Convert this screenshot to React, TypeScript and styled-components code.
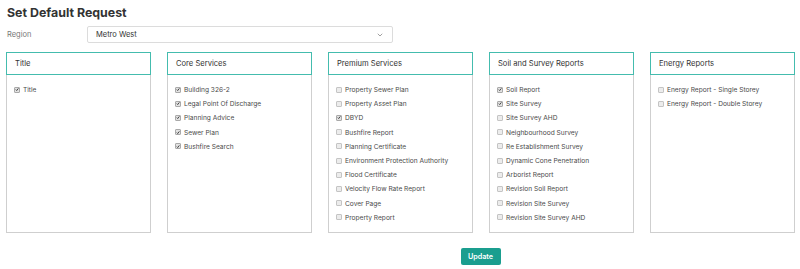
import React from "react";
import styled, { createGlobalStyle } from "styled-components";

const Global = createGlobalStyle`
  html, body { margin: 0; padding: 0; background: #fff; }
  body { font-family: Inter, "Open Sans", sans-serif; color: #333; }
`;

const Page = styled.div`
  width: 800px;
  height: 269px;
  box-sizing: border-box;
  padding: 4px 5px 0 6px;
  display: flex;
  flex-direction: column;
`;

const Heading = styled.h1`
  margin: 0 0 0 1px;
  font-size: 12.4px;
  line-height: 17px;
  font-weight: 700;
  color: #333;
  letter-spacing: 0px;
`;

const RegionRow = styled.div`
  display: flex;
  align-items: center;
  margin-top: 5px;
  height: 17px;
`;

const Label = styled.label`
  width: 80px;
  padding-left: 1px;
  font-size: 7.5px;
  color: #777;
`;

const Select = styled.div`
  width: 306px;
  height: 17px;
  box-sizing: border-box;
  border: 1px solid #dcdcdc;
  border-radius: 2px;
  display: flex;
  align-items: center;
  justify-content: space-between;
  padding: 0 9px 0 8px;
  font-size: 7.5px;
  color: #333;
`;

const Panels = styled.div`
  display: grid;
  grid-template-columns: repeat(5, 145px);
  column-gap: 16px;
  margin-top: 9px;
`;

const Panel = styled.section`
  display: flex;
  flex-direction: column;
  height: 181px;
`;

const PanelHeader = styled.div`
  height: 23px;
  box-sizing: border-box;
  border: 1px solid #44bcae;
  display: flex;
  align-items: center;
  padding-left: 8px;
  font-size: 7.6px;
  color: #333;
`;

const PanelBody = styled.div`
  flex: 1;
  border: 1px solid #cfcfcf;
  border-top: none;
  padding: 8px 0 0 7px;
  display: flex;
  flex-direction: column;
`;

const Item = styled.div`
  height: 14.2px;
  display: flex;
  align-items: center;
  gap: 3px;
  font-size: 6.6px;
  color: #4a4a4a;
`;

const Box = styled.span<{ $checked: boolean }>`
  width: 6px;
  height: 6px;
  box-sizing: border-box;
  border: 1px solid ${(p) => (p.$checked ? "#a9a9a9" : "#c4c4c4")};
  border-radius: 1px;
  background: ${(p) => (p.$checked ? "#e2e2e2" : "#ececec")};
  display: flex;
  align-items: center;
  justify-content: center;
  margin-top: -1px;
`;

const Footer = styled.div`
  display: flex;
  justify-content: center;
  margin-top: 15px;
  padding-left: 160px;
`;

const Button = styled.button`
  width: 40px;
  height: 17px;
  border: none;
  border-radius: 2px;
  background: #1a9e8f;
  color: #fff;
  font-family: inherit;
  font-size: 7.2px;
  font-weight: 600;
  padding: 0;
`;

type Group = { title: string; items: [string, boolean][] };

const groups: Group[] = [
  { title: "Title", items: [["Title", true]] },
  {
    title: "Core Services",
    items: [
      ["Building 326-2", true],
      ["Legal Point Of Discharge", true],
      ["Planning Advice", true],
      ["Sewer Plan", true],
      ["Bushfire Search", true],
    ],
  },
  {
    title: "Premium Services",
    items: [
      ["Property Sewer Plan", false],
      ["Property Asset Plan", false],
      ["DBYD", true],
      ["Bushfire Report", false],
      ["Planning Certificate", false],
      ["Environment Protection Authority", false],
      ["Flood Certificate", false],
      ["Velocity Flow Rate Report", false],
      ["Cover Page", false],
      ["Property Report", false],
    ],
  },
  {
    title: "Soil and Survey Reports",
    items: [
      ["Soil Report", true],
      ["Site Survey", true],
      ["Site Survey AHD", false],
      ["Neighbourhood Survey", false],
      ["Re Establishment Survey", false],
      ["Dynamic Cone Penetration", false],
      ["Arborist Report", false],
      ["Revision Soil Report", false],
      ["Revision Site Survey", false],
      ["Revision Site Survey AHD", false],
    ],
  },
  {
    title: "Energy Reports",
    items: [
      ["Energy Report - Single Storey", false],
      ["Energy Report - Double Storey", false],
    ],
  },
];

const Check = () => (
  <svg width="5" height="5" viewBox="0 0 10 10">
    <path d="M2 5.2 L4.2 7.6 L8.4 2.2" fill="none" stroke="#222" strokeWidth="2" />
  </svg>
);

const Chevron = () => (
  <svg width="6" height="4" viewBox="0 0 12 8">
    <path d="M1.5 1.5 L6 6 L10.5 1.5" fill="none" stroke="#777" strokeWidth="1.4" />
  </svg>
);

export default function App() {
  return (
    <>
      <Global />
      <Page>
        <Heading>Set Default Request</Heading>
        <RegionRow>
          <Label>Region</Label>
          <Select>
            <span>Metro West</span>
            <Chevron />
          </Select>
        </RegionRow>
        <Panels>
          {groups.map((g) => (
            <Panel key={g.title}>
              <PanelHeader>{g.title}</PanelHeader>
              <PanelBody>
                {g.items.map(([label, checked]) => (
                  <Item key={label}>
                    <Box $checked={checked}>{checked && <Check />}</Box>
                    <span>{label}</span>
                  </Item>
                ))}
              </PanelBody>
            </Panel>
          ))}
        </Panels>
        <Footer>
          <Button>Update</Button>
        </Footer>
      </Page>
    </>
  );
}
